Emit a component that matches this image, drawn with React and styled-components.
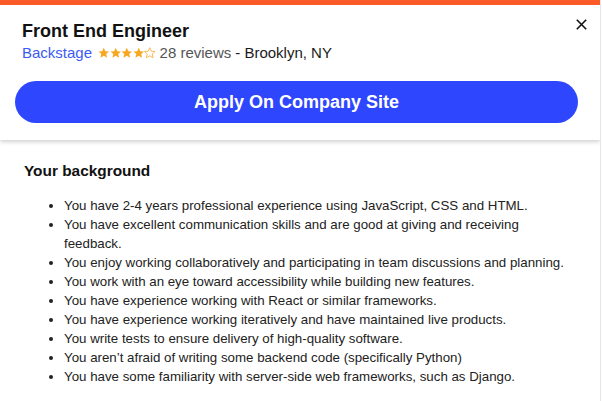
import React from "react";
import styled, { createGlobalStyle } from "styled-components";

const Global = createGlobalStyle`
  html, body { margin: 0; padding: 0; background: #fff; }
  body { font-family: "Liberation Sans", Arial, sans-serif; color: #111; }
`;

const Frame = styled.div`
  width: 600px;
  height: 401px;
  border-right: 1px solid #e6e6e6;
  overflow: hidden;
  box-sizing: content-box;
`;

const Header = styled.header`
  position: relative;
  border-top: 5px solid #fd5a2a;
  padding: 14px 22px 17px 15px;
  box-shadow: 0 2px 4px rgba(0, 0, 0, 0.18);
  background: #fff;
  z-index: 1;
`;

const Info = styled.div`
  padding-left: 7px;
`;

const Title = styled.h1`
  margin: 0;
  font-size: 18px;
  line-height: 24px;
  font-weight: 700;
  color: #111;
`;

const Meta = styled.div`
  display: flex;
  align-items: center;
  gap: 4px;
  font-size: 15px;
  line-height: 20px;
  margin-top: 0;
`;

const Company = styled.a`
  color: #3b5bf2;
  text-decoration: none;
`;

const Stars = styled.span`
  display: inline-flex;
  align-items: center;
  margin-left: 2px;
`;

const Reviews = styled.span`
  color: #555;
`;

const Location = styled.span`
  color: #1a1a1a;
`;

const Close = styled.button`
  position: absolute;
  top: 14px;
  right: 13px;
  border: 0;
  background: none;
  padding: 0;
  width: 11px;
  height: 11px;
  display: flex;
  cursor: pointer;
`;

const ApplyButton = styled.button`
  display: block;
  width: 563px;
  height: 42px;
  margin-top: 18px;
  border: 0;
  border-radius: 21px;
  background: #2e47fe;
  color: #fff;
  font-family: "Liberation Sans", Arial, sans-serif;
  font-size: 18px;
  font-weight: 700;
  cursor: pointer;
`;

const Body = styled.section`
  padding: 21px 25px 0 24px;
`;

const Heading = styled.h2`
  margin: 0 0 15px;
  font-size: 15.4px;
  line-height: 20px;
  font-weight: 700;
  color: #111;
`;

const List = styled.ul`
  margin: 0;
  padding-left: 40px;
  font-size: 13.3px;
  line-height: 19px;
  color: #222;
`;

const Item = styled.li``;

const Star = ({ filled }) => (
  <svg width="11.5" height="12" viewBox="0 0 24 24">
    <path
      d="M12 1l3.3 7.1 7.7.8-5.8 5.2 1.7 7.7L12 17.9l-6.9 3.9 1.7-7.7L1 8.9l7.7-.8z"
      fill={filled ? "#f7a823" : "none"}
      stroke="#f7a823"
      strokeWidth={filled ? 0 : 1.6}
      strokeLinejoin="round"
    />
  </svg>
);

const items = [
  "You have 2-4 years professional experience using JavaScript, CSS and HTML.",
  "You have excellent communication skills and are good at giving and receiving feedback.",
  "You enjoy working collaboratively and participating in team discussions and planning.",
  "You work with an eye toward accessibility while building new features.",
  "You have experience working with React or similar frameworks.",
  "You have experience working iteratively and have maintained live products.",
  "You write tests to ensure delivery of high-quality software.",
  "You aren\u2019t afraid of writing some backend code (specifically Python)",
  "You have some familiarity with server-side web frameworks, such as Django.",
];

export default function App() {
  return (
    <>
      <Global />
      <Frame>
        <Header>
          <Info>
            <Title>Front End Engineer</Title>
            <Meta>
              <Company href="#">Backstage</Company>
              <Stars>
                {[1, 1, 1, 1, 0].map((f, i) => (
                  <Star key={i} filled={!!f} />
                ))}
              </Stars>
              <Reviews>28 reviews</Reviews>
              <Location>- Brooklyn, NY</Location>
            </Meta>
          </Info>
          <Close aria-label="Close">
            <svg width="11" height="11" viewBox="0 0 11 11">
              <path d="M0.8 0.8L10.2 10.2M10.2 0.8L0.8 10.2" stroke="#111" strokeWidth="1.6" />
            </svg>
          </Close>
          <ApplyButton>Apply On Company Site</ApplyButton>
        </Header>
        <Body>
          <Heading>Your background</Heading>
          <List>
            {items.map((t) => (
              <Item key={t}>{t}</Item>
            ))}
          </List>
        </Body>
      </Frame>
    </>
  );
}
